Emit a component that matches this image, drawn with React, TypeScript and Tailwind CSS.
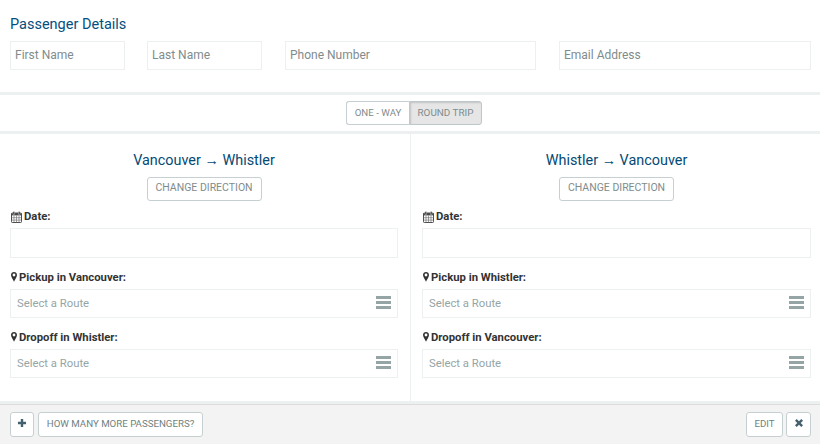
import React from "react";

function Calendar() {
  return (
    <svg width="11" height="12" viewBox="0 0 11 12" className="ml-px mr-[2px] mb-px shrink-0" fill="none">
      <rect x="0.500" y="2" width="10" height="9.500" rx="0.800" stroke="#4a4a4a" strokeWidth="1" />
      <rect x="0.500" y="2" width="10" height="2.400" fill="#4a4a4a" />
      <path d="M3 4.500v7M5.500 4.500v7M8 4.500v7M0.500 6.700h10M0.500 9.100h10" stroke="#777" strokeWidth="0.700" />
      <rect x="2" y="0.500" width="1.600" height="3" rx="0.500" fill="#333" stroke="#fff" strokeWidth="0.400" />
      <rect x="7.400" y="0.500" width="1.600" height="3" rx="0.500" fill="#333" stroke="#fff" strokeWidth="0.400" />
    </svg>
  );
}

function Pin() {
  return (
    <svg width="6" height="10" viewBox="0 0 6 10" className="mr-[2px] ml-px mb-[3px] shrink-0" fill="none">
      <path fillRule="evenodd" d="M3 0C4.700 0 6 1.300 6 3C6 4.800 4 7.600 3 9.800C2 7.600 0 4.800 0 3C0 1.300 1.300 0 3 0ZM3 1.600A1.400 1.400 0 1 0 3 4.400A1.400 1.400 0 1 0 3 1.600Z" fill="#333" />
    </svg>
  );
}

function Select({ label }: { label: string }) {
  return (
    <div>
      <div className="flex items-center h-[15px] text-[11.3px] font-bold text-[#333]">
        <Pin />
        {label}
      </div>
      <div className="mt-[3px] h-[29px] border border-[#ecf0f1] flex items-start justify-between pl-[6px] pr-[6px] text-[11.3px] text-[#95a5a6]">
        <span className="leading-[27px]">Select a Route</span>
        <span className="flex flex-col gap-[2px] mt-[6px]">
          <span className="block w-[15px] h-[3px] bg-[#95a5a6]" />
          <span className="block w-[15px] h-[3px] bg-[#95a5a6]" />
          <span className="block w-[15px] h-[3px] bg-[#95a5a6]" />
        </span>
      </div>
    </div>
  );
}

function Column({ from, to, className }: { from: string; to: string; className: string }) {
  return (
    <div className={className}>
      <h3 className="text-center text-[14.4px] leading-[18px] text-[#034a75] mt-[17px]">
        {from} <span className="font-['Liberation_Sans',sans-serif]">→</span> {to}
      </h3>
      <div className="flex justify-center mt-[7px]">
        <button className="w-[115px] h-[24px] border border-[#c6d0d2] rounded-[3px] text-[10.5px] pb-[2px] text-[#7f8c8d] bg-white">
          CHANGE DIRECTION
        </button>
      </div>
      <div className="flex items-center h-[15px] mt-[9px] text-[11.3px] font-bold text-[#333]">
        <Calendar />
        Date:
      </div>
      <div className="mt-[3px] h-[30px] border border-[#ecf0f1]" />
      <div className="mt-[13px] flex flex-col gap-[13px]">
        <Select label={`Pickup in ${from}:`} />
        <Select label={`Dropoff in ${to}:`} />
      </div>
    </div>
  );
}

function Field({ text, className }: { text: string; className: string }) {
  return (
    <div className={`${className} shrink-0 h-[29px] border border-[#ecf0f1] pl-[4px] text-[12px] leading-[26px] text-[#7f8c8d]`}>
      {text}
    </div>
  );
}

const btn = "border border-[#c6d0d2] rounded-[3px] h-[25px] text-[9.7px] text-[#6f7f80] bg-white flex items-center justify-center";

export default function App() {
  return (
    <div className="w-[820px] h-[444px] bg-white overflow-hidden flex flex-col font-['Roboto',sans-serif]">
      <section className="h-[95px] shrink-0 border-b-[3px] border-[#ecf0f1] pl-[10px] pr-[9px] pt-[16px]">
        <h2 className="text-[14.5px] leading-[18px] text-[#034f80]">Passenger Details</h2>
        <div className="flex mt-[7px]">
          <Field text="First Name" className="w-[115px]" />
          <Field text="Last Name" className="w-[115px] ml-[22px]" />
          <Field text="Phone Number" className="w-[251px] ml-[23px]" />
          <Field text="Email Address" className="w-[252px] ml-[23px]" />
        </div>
      </section>
      <section className="h-[39px] shrink-0 border-b-[3px] border-[#ecf0f1] flex justify-center items-start pt-[6px]">
        <div className="flex ml-[8px]">
          <button className="w-[63px] h-[24px] border border-[#c6d0d2] border-r-0 rounded-l-[3px] text-[9.7px] text-[#7f8c8d] bg-white">
            ONE - WAY
          </button>
          <button className="w-[73px] h-[24px] border border-[#bdc8ca] rounded-r-[3px] text-[9.9px] text-[#7f8c8d] bg-[#e6e6e6] shadow-[inset_1px_1px_2px_rgba(0,0,0,0.15)]">
            ROUND TRIP
          </button>
        </div>
      </section>
      <section className="flex h-[267px] shrink-0">
        <Column from="Vancouver" to="Whistler" className="w-[411px] border-r border-[#ecf0f1] pl-[10px] pr-[12px]" />
        <Column from="Whistler" to="Vancouver" className="flex-1 pl-[11px] pr-[9px]" />
      </section>
      <footer className="flex-1 flex flex-col bg-[#f3f3f3] border-t-[3px] border-[#ecf0f1]">
        <div className="flex-1 border-t border-[#dddddd] flex items-start justify-between pl-[10px] pr-[9px] pt-[7px]">
          <div className="flex gap-[4px]">
            <button className={`${btn} w-[24px]`}>
              <svg width="8" height="8" viewBox="0 0 8 8" className="mb-[3px]"><path d="M2.800 0h2.400v2.800H8v2.400H5.200V8H2.800V5.200H0V2.800h2.800z" fill="#45606f" /></svg>
            </button>
            <button className={`${btn} w-[165px] pb-[1px]`}>HOW MANY MORE PASSENGERS?</button>
          </div>
          <div className="flex gap-[3px]">
            <button className={`${btn} w-[37px] pb-[1px]`}>EDIT</button>
            <button className={`${btn} w-[25px]`}>
              <svg width="8" height="8" viewBox="0 0 8 8" className="mb-[3px]"><path d="M1.700 0 4 2.300 6.300 0 8 1.700 5.700 4 8 6.300 6.300 8 4 5.700 1.700 8 0 6.300 2.300 4 0 1.700z" fill="#45606f" /></svg>
            </button>
          </div>
        </div>
      </footer>
    </div>
  );
}
